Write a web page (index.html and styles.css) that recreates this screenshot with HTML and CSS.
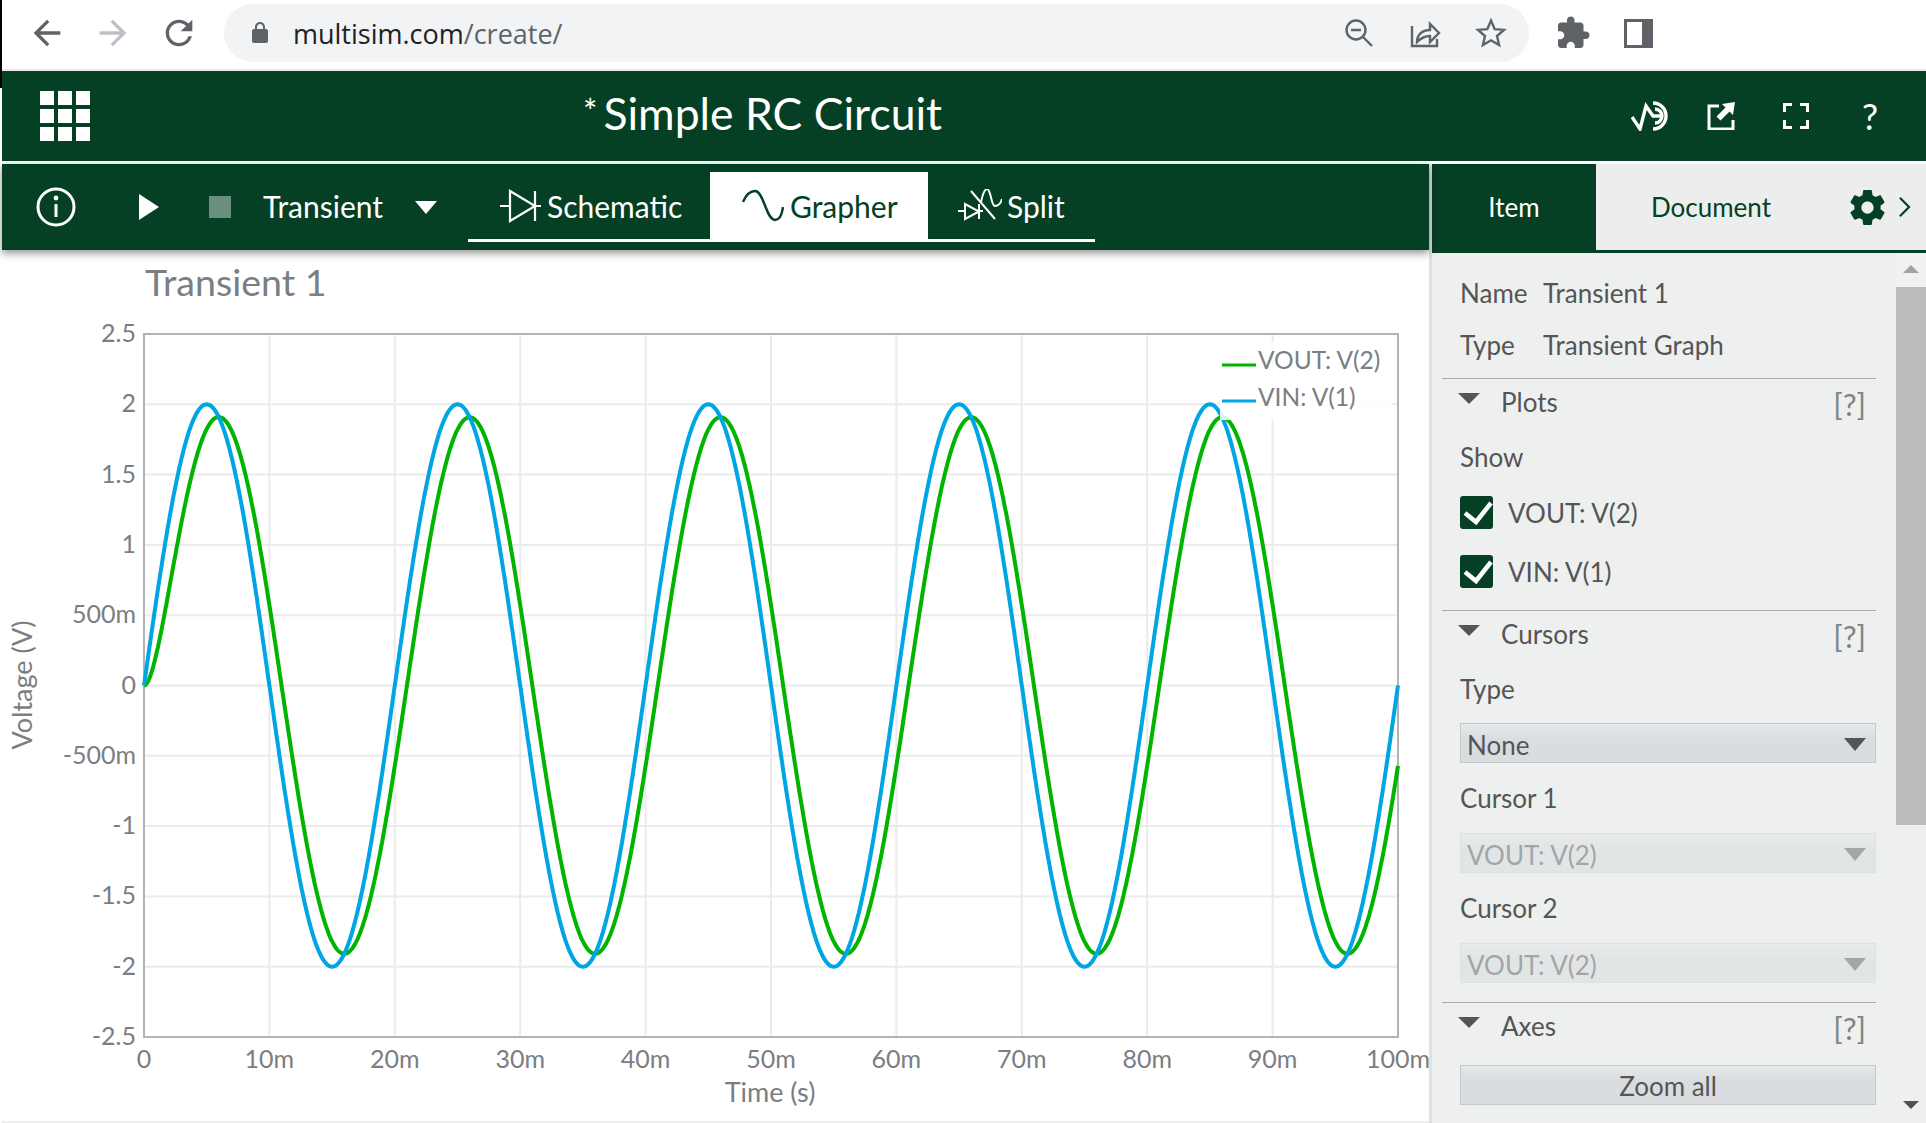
FILE: index.html
```html
<!doctype html>
<html lang="en">
  <head>
    <meta charset="UTF-8" />
    <title>Multisim Live - Simple RC Circuit</title>
    <link rel="stylesheet" href="styles.css">
  </head>
  <body>
    <div class="edge"></div>
    <div class="window">
      <!-- browser toolbar -->
      <div class="browser-bar">
        <svg class="nav-icon" viewBox="0 0 24 24"><path d="M20 11H7.83l5.59-5.59L12 4l-8 8 8 8 1.41-1.41L7.83 13H20v-2z" /></svg>
        <svg class="nav-icon nav-off" viewBox="0 0 24 24"><path d="M4 11h12.17l-5.59-5.59L12 4l8 8-8 8-1.41-1.41L16.17 13H4v-2z" /></svg>
        <svg class="nav-icon" viewBox="0 0 24 24"><path d="M17.65 6.35A7.958 7.958 0 0012 4c-4.42 0-7.99 3.58-7.99 8s3.57 8 7.99 8c3.73 0 6.84-2.55 7.73-6h-2.08A5.99 5.99 0 0112 18c-3.31 0-6-2.69-6-6s2.69-6 6-6c1.66 0 3.14.69 4.22 1.78L13 11h7V4l-2.35 2.35z" /></svg>
        <div class="omnibox">
          <svg class="lock-icon" viewBox="0 0 24 24"><path d="M18 8h-1V6c0-2.76-2.24-5-5-5S7 3.24 7 6v2H6c-1.1 0-2 .9-2 2v10c0 1.1.9 2 2 2h12c1.1 0 2-.9 2-2V10c0-1.1-.9-2-2-2zM9 6c0-1.66 1.34-3 3-3s3 1.34 3 3v2H9V6z" /></svg>
          <span class="url">multisim.com<span class="url-path">/create/</span></span>
          <svg class="omni-icon" viewBox="0 0 32 32"><circle cx="13" cy="13" r="9.5" /><path d="M8 13h10M20 20l9 9" /></svg>
          <svg class="omni-icon" viewBox="0 0 32 32"><path d="M3 9v20h25v-7" /><path d="M8 25c0-7 5-12 13-12V7l9 9-9 9v-6c-5 0-9 2-13 6z" /></svg>
          <svg class="omni-icon" viewBox="0 0 32 32"><path d="M16 3.5l3.7 8.6 9.3.8-7 6.1 2.1 9.1-8.1-4.8-8.1 4.8 2.1-9.1-7-6.1 9.3-.8z" /></svg>
        </div>
        <svg class="ext-icon" viewBox="0 0 24 24"><path d="M20.5 11H19V7c0-1.1-.9-2-2-2h-4V3.5C13 2.12 11.88 1 10.5 1S8 2.12 8 3.5V5H4c-1.1 0-1.99.9-1.99 2v3.8H3.5c1.49 0 2.7 1.21 2.7 2.7s-1.21 2.7-2.7 2.7H2V20c0 1.1.9 2 2 2h3.8v-1.5c0-1.49 1.21-2.7 2.7-2.7 1.49 0 2.7 1.21 2.7 2.7V22H17c1.1 0 2-.9 2-2v-4h1.5c1.38 0 2.5-1.12 2.5-2.5S21.88 11 20.5 11z" /></svg>
        <div class="side-panel-icon"></div>
      </div>

      <!-- app header -->
      <header class="app-header">
        <div class="app-grid">
          <i></i><i></i><i></i><i></i><i></i><i></i><i></i><i></i><i></i>
        </div>
        <h1 class="doc-title"><span class="dirty">*</span>Simple RC Circuit</h1>
        <div class="header-actions">
          <svg class="wave-icon" viewBox="0 0 42 30"><path d="M1 16l8 12 6-23 7 10h10" /><path d="M22 2a13 13 0 010 26" /><path d="M24 8a7 7 0 010 14" /></svg>
          <svg class="export-icon" viewBox="0 0 28 28"><path d="M12 4H2v23h24v-9" /><path class="solid" d="M28 0L15 2l3.5 3.5-9 9 4 4 9-9L26 13z" /></svg>
          <svg class="full-icon" viewBox="0 0 26 26"><path d="M1 9V1h8M17 1h8v8M25 17v8h-8M9 25H1v-8" /></svg>
          <span class="help-btn">?</span>
        </div>
      </header>

      <div class="workspace">
        <section class="main-pane">
          <nav class="toolbar">
            <svg class="info-icon" viewBox="0 0 40 40"><circle cx="20" cy="20" r="18" /><path d="M20 17v13" /><circle class="dot" cx="20" cy="11" r="2.4" /></svg>
            <div class="play-btn"></div>
            <div class="stop-btn"></div>
            <span class="sim-type">Transient</span>
            <div class="sim-caret"></div>
            <div class="view-tabs">
              <div class="view-tab tab-schematic">
                <svg class="tab-icon icon-schematic" viewBox="0 0 41 34"><path d="M0 17h10M35 17h6M35 2v30M10 2v30l25-15z" /></svg>
                Schematic
              </div>
              <div class="view-tab tab-grapher active">
                <svg class="tab-icon icon-grapher" viewBox="0 0 42 34"><path d="M1 13C4 6 8 2 13 2c9 0 11 29 20 29 4 0 7-5 8-13" /></svg>
                Grapher
              </div>
              <div class="view-tab tab-split">
                <svg class="tab-icon icon-split" viewBox="0 0 44 34"><path d="M0 22h7M21 22h4M7 15v15l14-7.5zM21 15v15M13 2l24 28" /><path d="M23 13c2-9 4-13 6-13 4 0 4 17 8 17 3 0 6-3 7-7" /></svg>
                Split
              </div>
            </div>
          </nav>
          <svg id="chart" class="chart" viewBox="2 250 1427 873"></svg>
        </section>

        <aside class="side-pane">
          <div class="side-tabs">
            <div class="side-tab active">Item</div>
            <div class="side-tab">Document</div>
            <svg class="gear-icon" viewBox="2 2 20 20"><path d="M19.43 12.98c.04-.32.07-.64.07-.98s-.03-.66-.07-.98l2.11-1.65c.19-.15.24-.42.12-.64l-2-3.46c-.12-.22-.39-.3-.61-.22l-2.49 1c-.52-.4-1.08-.73-1.69-.98l-.38-2.65C14.46 2.18 14.25 2 14 2h-4c-.25 0-.46.18-.49.42l-.38 2.65c-.61.25-1.17.59-1.69.98l-2.49-1c-.23-.09-.49 0-.61.22l-2 3.46c-.13.22-.07.49.12.64l2.11 1.65c-.04.32-.07.65-.07.98s.03.66.07.98l-2.11 1.65c-.19.15-.24.42-.12.64l2 3.46c.12.22.39.3.61.22l2.49-1c.52.4 1.08.73 1.69.98l.38 2.65c.03.24.24.42.49.42h4c.25 0 .46-.18.49-.42l.38-2.65c.61-.25 1.17-.59 1.69-.98l2.49 1c.23.09.49 0 .61-.22l2-3.46c.12-.22.07-.49-.12-.64l-2.11-1.65zM12 15.5c-1.93 0-3.5-1.57-3.5-3.5s1.57-3.5 3.5-3.5 3.5 1.57 3.5 3.5-1.57 3.5-3.5 3.5z" /></svg>
            <svg class="chevron-icon" viewBox="0 0 14 24"><path d="M2 2l10 10L2 22" /></svg>
          </div>

          <div class="side-body">
            <div class="props">
              <div class="info-rows">
                <div class="info-row"><span class="info-key">Name</span><span>Transient 1</span></div>
                <div class="info-row"><span class="info-key">Type</span><span>Transient Graph</span></div>
              </div>

              <div class="prop-section section-plots">
                <div class="section-head"><i class="tri"></i><span>Plots</span><span class="section-help">[?]</span></div>
                <div class="field-label">Show</div>
                <div class="check-row"><span class="check"><svg viewBox="0 0 33 33"><path d="M5 17l11 9L31 7" /></svg></span>VOUT: V(2)</div>
                <div class="check-row"><span class="check"><svg viewBox="0 0 33 33"><path d="M5 17l11 9L31 7" /></svg></span>VIN: V(1)</div>
              </div>

              <div class="prop-section section-cursors">
                <div class="section-head"><i class="tri"></i><span>Cursors</span><span class="section-help">[?]</span></div>
                <div class="field-label">Type</div>
                <div class="select">None<i class="tri"></i></div>
                <div class="field-label">Cursor 1</div>
                <div class="select disabled">VOUT: V(2)<i class="tri"></i></div>
                <div class="field-label">Cursor 2</div>
                <div class="select disabled">VOUT: V(2)<i class="tri"></i></div>
              </div>

              <div class="prop-section">
                <div class="section-head"><i class="tri"></i><span>Axes</span><span class="section-help">[?]</span></div>
                <div class="zoom-btn">Zoom all</div>
              </div>
            </div>

            <div class="scrollbar">
              <div class="scroll-up"><i></i></div>
              <div class="scroll-thumb"></div>
              <div class="scroll-track"><i></i></div>
            </div>
          </div>
        </aside>
      </div>
    </div>
    <script src="chart.js"></script>
  </body>
</html>
```

FILE: styles.css
```css
* {
  box-sizing: border-box;
}

html,
body {
  height: 100%;
}

body {
  margin: 0;
  display: flex;
  overflow: hidden;
  background: white;
  font-family: 'Lato', 'Liberation Sans', sans-serif;
}

.edge {
  width: 2px;
  flex-shrink: 0;
  background: linear-gradient(#000 88px, #fff 88px);
}

.window {
  flex: 1;
  min-width: 0;
  display: flex;
  flex-direction: column;
}

/* browser toolbar */
.browser-bar {
  height: 71px;
  flex-shrink: 0;
  display: flex;
  align-items: center;
  padding: 0 0 3px 25px;
  background: white;
  border-bottom: 2px solid #e8eaed;
}

.nav-icon {
  width: 40px;
  height: 40px;
  margin-right: 26px;
  fill: #5f6368;
}

.nav-off {
  fill: #bdc1c6;
}

.omnibox {
  width: 1305px;
  height: 58px;
  margin-left: -1px;
  display: flex;
  align-items: center;
  padding-left: 24px;
  border-radius: 29px;
  background: #f1f3f4;
}

.lock-icon {
  width: 24px;
  height: 24px;
  margin-right: 21px;
  fill: #5f6368;
}

.url {
  flex: 1;
  font-family: 'Open Sans', sans-serif;
  font-size: 27px;
  color: #202124;
}

.url-path {
  color: #5f6368;
}

.omni-icon {
  width: 32px;
  height: 32px;
  margin-right: 34px;
  fill: none;
  stroke: #5f6368;
  stroke-width: 2.4;
}

.omni-icon:last-child {
  margin-right: 22px;
}

.ext-icon {
  width: 36px;
  height: 36px;
  margin-left: 26px;
  fill: #5f6368;
}

.side-panel-icon {
  width: 29px;
  height: 29px;
  margin-left: 33px;
  border: solid #5f6368;
  border-width: 3px 11px 3px 3px;
}

/* app header */
.app-header {
  height: 93px;
  flex-shrink: 0;
  display: flex;
  align-items: center;
  padding-left: 38px;
  background: #054024;
  border-bottom: 3px solid white;
  color: white;
}

.app-grid {
  width: 51px;
  display: grid;
  grid-template-columns: repeat(3, 14px);
  gap: 4px;
}

.app-grid i {
  height: 14px;
  background: white;
}

.doc-title {
  margin: 0 0 7px 492px;
  font-size: 44.5px;
  font-weight: 400;
  white-space: nowrap;
}

.dirty {
  margin-right: 6px;
  font-size: 34px;
  vertical-align: 6px;
}

.header-actions {
  margin-left: auto;
  display: flex;
  align-items: center;
  padding-right: 48px;
}

.wave-icon,
.export-icon,
.full-icon {
  fill: none;
  stroke: white;
  stroke-width: 3;
}

.wave-icon {
  width: 42px;
  height: 30px;
  stroke-width: 3.4;
}

.export-icon {
  width: 28px;
  height: 28px;
  margin-left: 34px;
}

.export-icon .solid {
  fill: white;
  stroke: none;
}

.full-icon {
  width: 26px;
  height: 26px;
  margin-left: 48px;
  stroke-width: 4;
}

.help-btn {
  margin-left: 53px;
  font-size: 36px;
  line-height: 1;
}

/* workspace */
.workspace {
  flex: 1;
  min-height: 0;
  display: flex;
}

.main-pane {
  flex: 1;
  min-width: 0;
  display: flex;
  flex-direction: column;
}

.toolbar {
  height: 86px;
  flex-shrink: 0;
  position: relative;
  z-index: 1;
  display: flex;
  align-items: center;
  padding-left: 34px;
  background: #054024;
  box-shadow: 0 3px 8px rgba(0, 0, 0, 0.45);
  color: white;
  font-size: 30px;
}

.info-icon {
  width: 40px;
  height: 40px;
  margin-right: 63px;
  fill: none;
  stroke: white;
  stroke-width: 3;
}

.info-icon .dot {
  fill: white;
  stroke: none;
}

.play-btn {
  width: 0;
  height: 0;
  margin-right: 50px;
  border-left: 20px solid white;
  border-top: 13px solid transparent;
  border-bottom: 13px solid transparent;
}

.stop-btn {
  width: 22px;
  height: 22px;
  margin-right: 32px;
  background: #6a8f7e;
}

.sim-type {
  width: 152px;
  margin-bottom: 2px;
}

.sim-caret {
  width: 0;
  height: 0;
  border-top: 13px solid white;
  border-left: 11px solid transparent;
  border-right: 11px solid transparent;
}

.view-tabs {
  height: 70px;
  margin-left: 31px;
  align-self: flex-start;
  margin-top: 8px;
  display: flex;
  border-bottom: 3px solid white;
}

.view-tab {
  height: 70px;
  display: flex;
  align-items: center;
  white-space: nowrap;
  padding-bottom: 3px;
}

.tab-schematic {
  width: 242px;
  padding-left: 32px;
}

.tab-grapher {
  width: 218px;
  padding-left: 32px;
}

.tab-grapher.active {
  background: white;
  color: #054024;
}

.tab-split {
  width: 167px;
  padding-left: 30px;
}

.tab-icon {
  height: 34px;
  flex-shrink: 0;
  fill: none;
  stroke: currentColor;
}

.icon-schematic {
  width: 41px;
  margin-right: 6px;
  stroke-width: 2.2;
}

.icon-grapher {
  width: 42px;
  margin-right: 6px;
  stroke-width: 2.4;
}

.icon-split {
  width: 44px;
  margin-right: 5px;
  stroke-width: 2;
}

.chart {
  flex: 1;
  min-height: 0;
  width: 100%;
  display: block;
  font-family: 'Lato', sans-serif;
  fill: #7b7e82;
}

.chart-title {
  font-size: 37.5px;
}

.chart-tick {
  font-size: 25px;
}

.chart-axis {
  font-size: 27px;
}

.chart-legend {
  font-size: 24.5px;
}

/* side panel */
.side-pane {
  width: 497px;
  flex-shrink: 0;
  display: flex;
  flex-direction: column;
  border-left: 3px solid #dde2e5;
  background: #eef0ef;
  color: #555;
  font-size: 26px;
}

.side-tabs {
  height: 89px;
  flex-shrink: 0;
  display: flex;
  align-items: center;
  border-bottom: 3px solid #054024;
  background: #eceeee;
  color: #054024;
}

.side-tab {
  height: 100%;
  width: 164px;
  display: flex;
  align-items: center;
  justify-content: center;
}

.side-tab + .side-tab {
  width: 230px;
}

.side-tab.active {
  background: #054024;
  color: white;
}

.gear-icon {
  width: 35px;
  height: 35px;
  margin-left: 24px;
  fill: #054024;
}

.chevron-icon {
  width: 13px;
  height: 22px;
  margin-left: 13px;
  fill: none;
  stroke: #054024;
  stroke-width: 2.4;
}

.side-body {
  flex: 1;
  min-height: 0;
  display: flex;
  overflow: hidden;
}

.props {
  width: 434px;
  margin-left: 10px;
  padding-top: 14px;
}

.info-rows {
  padding-left: 18px;
  padding-bottom: 7px;
}

.info-row {
  height: 52px;
  display: flex;
  align-items: center;
}

.info-key {
  width: 83px;
}

.prop-section {
  border-top: 1px solid #a9abae;
}

.section-plots {
  padding-bottom: 9px;
}

.section-cursors {
  padding-bottom: 19px;
}

.section-head {
  height: 46px;
  display: flex;
  align-items: center;
  padding-left: 16px;
  padding-right: 10px;
}

.tri {
  width: 0;
  height: 0;
  display: block;
  border-top: 11px solid #555;
  border-left: 11px solid transparent;
  border-right: 11px solid transparent;
}

.section-head .tri {
  margin-right: 21px;
  margin-top: -7px;
}

.section-help {
  margin-left: auto;
  margin-top: 3px;
  font-size: 31px;
  color: #808488;
}

.field-label {
  height: 50px;
  margin: 10px 0 10px 18px;
  display: flex;
  align-items: center;
}

.section-head + .field-label {
  margin-top: 7px;
  margin-bottom: 9px;
}

.section-plots .field-label {
  margin-bottom: 1px;
}

.check-row {
  height: 59px;
  margin-left: 18px;
  display: flex;
  align-items: center;
}

.check {
  width: 33px;
  height: 33px;
  margin-right: 15px;
  border-radius: 3px;
  background: #054024;
}

.check svg {
  display: block;
  fill: none;
  stroke: white;
  stroke-width: 4.5;
}

.select,
.zoom-btn {
  height: 40px;
  margin-left: 18px;
  border: 1px solid #c4c8ca;
  background: linear-gradient(#e6e9ea, #d9dde0 40%);
}

.select {
  display: flex;
  align-items: center;
  justify-content: space-between;
  padding: 3px 9px 0 6px;
}

.select .tri {
  border-top-width: 13px;
}

.select.disabled {
  border-color: #dfe2e3;
  background: linear-gradient(#e8eaeb, #e2e5e6 40%);
  color: #a3a5a6;
}

.select.disabled .tri {
  border-top-color: #a3a5a6;
}

.zoom-btn {
  margin-top: 16px;
  padding-top: 2px;
  display: flex;
  align-items: center;
  justify-content: center;
}

.scrollbar {
  width: 30px;
  flex-shrink: 0;
  margin-left: auto;
  display: flex;
  flex-direction: column;
}

.scroll-up {
  height: 34px;
  background: #f1f1f1;
  display: flex;
  justify-content: center;
  padding-top: 12px;
}

.scroll-up i {
  width: 0;
  height: 0;
  border-bottom: 8px solid #a3a3a3;
  border-left: 8px solid transparent;
  border-right: 8px solid transparent;
}

.scroll-thumb {
  height: 538px;
  background: #bcbcbc;
}

.scroll-track {
  flex: 1;
  display: flex;
  justify-content: center;
  align-items: flex-end;
  padding-bottom: 14px;
}

.scroll-track i {
  width: 0;
  height: 0;
  border-top: 8px solid #505050;
  border-left: 8px solid transparent;
  border-right: 8px solid transparent;
}
```

FILE: chart.js
```js
// plot box in page coordinates, matches the svg viewBox
var plot = { left: 144, right: 1398, top: 334, bottom: 1037 };
var tMax = 100; // ms
var vMax = 2.5;

var yTicks = ['2.5', '2', '1.5', '1', '500m', '0', '-500m', '-1', '-1.5', '-2', '-2.5'];
var xTicks = ['0', '10m', '20m', '30m', '40m', '50m', '60m', '70m', '80m', '90m', '100m'];

var chart = document.getElementById('chart');
var NS = 'http://www.w3.org/2000/svg';

function add(tag, attrs, text) {
  var el = document.createElementNS(NS, tag);
  for (var key in attrs) {
    el.setAttribute(key, attrs[key]);
  }
  if (text) el.textContent = text;
  chart.appendChild(el);
  return el;
}

function px(t) {
  return plot.left + (t / tMax) * (plot.right - plot.left);
}

function py(v) {
  return plot.top + ((vMax - v) / (2 * vMax)) * (plot.bottom - plot.top);
}

function vin(t) {
  return 2 * Math.sin((2 * Math.PI * t) / 20);
}

// RC low pass, tau about 1ms, settles from 0
function vout(t) {
  var w = (2 * Math.PI) / 20;
  var tau = 1;
  var phi = Math.atan(w * tau);
  var amp = 2 * Math.cos(phi);
  return amp * (Math.sin(w * t - phi) + Math.sin(phi) * Math.exp(-t / tau));
}

function curve(fn, color) {
  var d = '';
  for (var t = 0; t <= tMax; t += 0.1) {
    d += (d ? 'L' : 'M') + px(t).toFixed(1) + ' ' + py(fn(t)).toFixed(1);
  }
  add('path', { d: d, fill: 'none', stroke: color, 'stroke-width': 4 });
}

add('text', { x: 145, y: 296, class: 'chart-title' }, 'Transient 1');

yTicks.forEach(function (label, i) {
  var y = plot.top + (i * (plot.bottom - plot.top)) / 10;
  add('line', { x1: plot.left, x2: plot.right, y1: y, y2: y, stroke: '#ebebeb', 'stroke-width': 2 });
  add('text', { x: 136, y: y + 8, 'text-anchor': 'end', class: 'chart-tick' }, label);
});

xTicks.forEach(function (label, i) {
  var x = plot.left + (i * (plot.right - plot.left)) / 10;
  add('line', { x1: x, x2: x, y1: plot.top, y2: plot.bottom, stroke: '#ebebeb', 'stroke-width': 2 });
  add('text', { x: x, y: 1068, 'text-anchor': 'middle', class: 'chart-tick' }, label);
});

add('rect', {
  x: plot.left,
  y: plot.top,
  width: plot.right - plot.left,
  height: plot.bottom - plot.top,
  fill: 'none',
  stroke: '#b3b3b3',
  'stroke-width': 2
});

curve(vout, '#00b400');
curve(vin, '#00a5e3');

// legend sits on top of the curves
add('rect', { x: 1220, y: 342, width: 172, height: 78, fill: 'white', 'fill-opacity': 0.85 });
add('line', { x1: 1222, x2: 1256, y1: 365, y2: 365, stroke: '#00b400', 'stroke-width': 3 });
add('line', { x1: 1222, x2: 1256, y1: 401, y2: 401, stroke: '#00a5e3', 'stroke-width': 3 });
add('text', { x: 1258, y: 369, class: 'chart-legend' }, 'VOUT: V(2)');
add('text', { x: 1258, y: 406, class: 'chart-legend' }, 'VIN: V(1)');

add('text', { x: 770, y: 1102, 'text-anchor': 'middle', class: 'chart-axis' }, 'Time (s)');
add('text', {
  x: 0,
  y: 0,
  'text-anchor': 'middle',
  class: 'chart-axis',
  transform: 'translate(32 685) rotate(-90)'
}, 'Voltage (V)');

// thin line along the bottom of the pane
add('rect', { x: 2, y: 1121, width: 1427, height: 2, fill: '#eeeeee' });
```
